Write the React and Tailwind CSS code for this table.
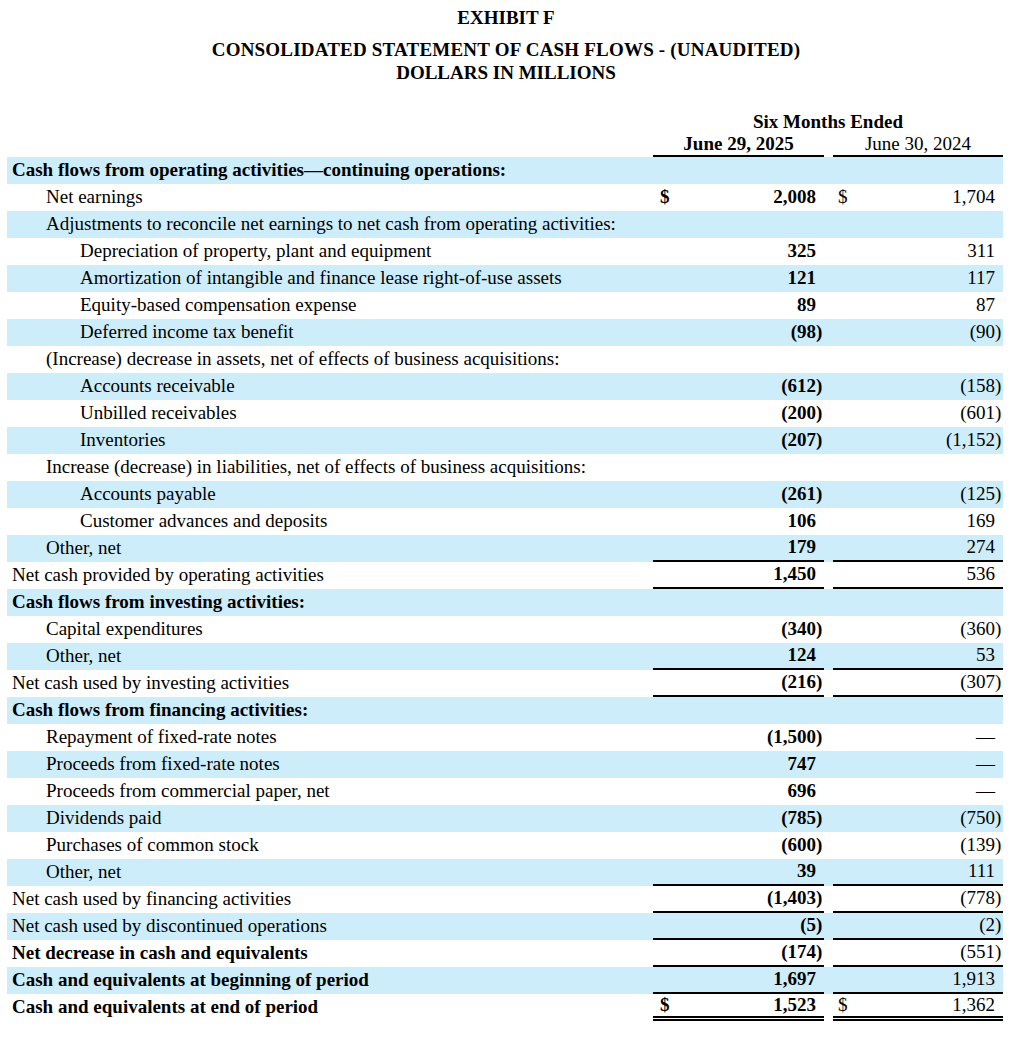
const ROWS = [
  { label: 'Cash flows from operating activities—continuing operations:', bold: true, indent: 0 },
  { label: 'Net earnings', indent: 1, a: '2,008', b: '1,704', dollar: true },
  { label: 'Adjustments to reconcile net earnings to net cash from operating activities:', indent: 1 },
  { label: 'Depreciation of property, plant and equipment', indent: 2, a: '325', b: '311' },
  { label: 'Amortization of intangible and finance lease right-of-use assets', indent: 2, a: '121', b: '117' },
  { label: 'Equity-based compensation expense', indent: 2, a: '89', b: '87' },
  { label: 'Deferred income tax benefit', indent: 2, a: '(98)', b: '(90)' },
  { label: '(Increase) decrease in assets, net of effects of business acquisitions:', indent: 1 },
  { label: 'Accounts receivable', indent: 2, a: '(612)', b: '(158)' },
  { label: 'Unbilled receivables', indent: 2, a: '(200)', b: '(601)' },
  { label: 'Inventories', indent: 2, a: '(207)', b: '(1,152)' },
  { label: 'Increase (decrease) in liabilities, net of effects of business acquisitions:', indent: 1 },
  { label: 'Accounts payable', indent: 2, a: '(261)', b: '(125)' },
  { label: 'Customer advances and deposits', indent: 2, a: '106', b: '169' },
  { label: 'Other, net', indent: 1, a: '179', b: '274', line: 'single' },
  { label: 'Net cash provided by operating activities', indent: 0, a: '1,450', b: '536', line: 'single' },
  { label: 'Cash flows from investing activities:', bold: true, indent: 0 },
  { label: 'Capital expenditures', indent: 1, a: '(340)', b: '(360)' },
  { label: 'Other, net', indent: 1, a: '124', b: '53', line: 'single' },
  { label: 'Net cash used by investing activities', indent: 0, a: '(216)', b: '(307)', line: 'single' },
  { label: 'Cash flows from financing activities:', bold: true, indent: 0 },
  { label: 'Repayment of fixed-rate notes', indent: 1, a: '(1,500)', b: '—' },
  { label: 'Proceeds from fixed-rate notes', indent: 1, a: '747', b: '—' },
  { label: 'Proceeds from commercial paper, net', indent: 1, a: '696', b: '—' },
  { label: 'Dividends paid', indent: 1, a: '(785)', b: '(750)' },
  { label: 'Purchases of common stock', indent: 1, a: '(600)', b: '(139)' },
  { label: 'Other, net', indent: 1, a: '39', b: '111', line: 'single' },
  { label: 'Net cash used by financing activities', indent: 0, a: '(1,403)', b: '(778)', line: 'single' },
  { label: 'Net cash used by discontinued operations', indent: 0, a: '(5)', b: '(2)', line: 'single' },
  { label: 'Net decrease in cash and equivalents', bold: true, indent: 0, a: '(174)', b: '(551)', line: 'single' },
  { label: 'Cash and equivalents at beginning of period', bold: true, indent: 0, a: '1,697', b: '1,913', line: 'single' },
  { label: 'Cash and equivalents at end of period', bold: true, indent: 0, a: '1,523', b: '1,362', dollar: true, line: 'double' },
];

const INDENT = ['pl-[5px]', 'pl-[39px]', 'pl-[73px]'];

// closing paren hangs past the digits, like the printed statement
const Value = ({ v }) => {
  if (!v) return null;
  if (v.endsWith(')')) {
    return (
      <span>
        {v.slice(0, -1)}
        <span className="inline-block w-0">)</span>
      </span>
    );
  }
  return <span>{v}</span>;
};

const lineClass = (line) => {
  if (line === 'single') return 'border-b-2 border-black';
  if (line === 'double') return 'border-b-[5px] border-double border-black';
  return '';
};

const Row = ({ row, shaded }) => (
  <div className={`flex h-[27px] items-stretch ${shaded ? 'bg-[#cdedfb]' : 'bg-white'}`}>
    <div className={`flex-1 flex items-center whitespace-nowrap ${INDENT[row.indent]} ${row.bold ? 'font-bold' : ''}`}>
      {row.label}
    </div>
    <div className={`w-[171px] flex items-center justify-between pl-[7px] pr-[8px] font-bold ${lineClass(row.line)}`}>
      <span>{row.dollar ? '$' : ''}</span>
      <Value v={row.a} />
    </div>
    <div className="w-[9px]" />
    <div className={`w-[170px] flex items-center justify-between pl-[5px] pr-[8px] ${lineClass(row.line)}`}>
      <span>{row.dollar ? '$' : ''}</span>
      <Value v={row.b} />
    </div>
  </div>
);

export default function App() {
  return (
    <div className="w-[1024px] h-[1059px] bg-white text-black text-[19px] font-['Liberation_Serif','Times_New_Roman',serif]">
      <div className="pt-[6px] text-center font-bold leading-[23px] pr-[12px]">
        <div>EXHIBIT F</div>
        <div className="mt-[9px] tracking-[0.2px]">CONSOLIDATED STATEMENT OF CASH FLOWS - (UNAUDITED)</div>
        <div>DOLLARS IN MILLIONS</div>
      </div>

      <div className="ml-[7px] w-[996px]">
        <div className="flex mt-[27px] leading-[22px]">
          <div className="flex-1" />
          <div className="w-[350px] text-center font-bold">Six Months Ended</div>
        </div>
        <div className="flex leading-[22px]">
          <div className="flex-1" />
          <div className="w-[171px] text-center font-bold border-b-2 border-black">June 29, 2025</div>
          <div className="w-[9px]" />
          <div className="w-[170px] text-center border-b-2 border-black">June 30, 2024</div>
        </div>

        {ROWS.map((row, i) => (
          <Row key={i} row={row} shaded={i % 2 === 0} />
        ))}
      </div>
    </div>
  );
}
